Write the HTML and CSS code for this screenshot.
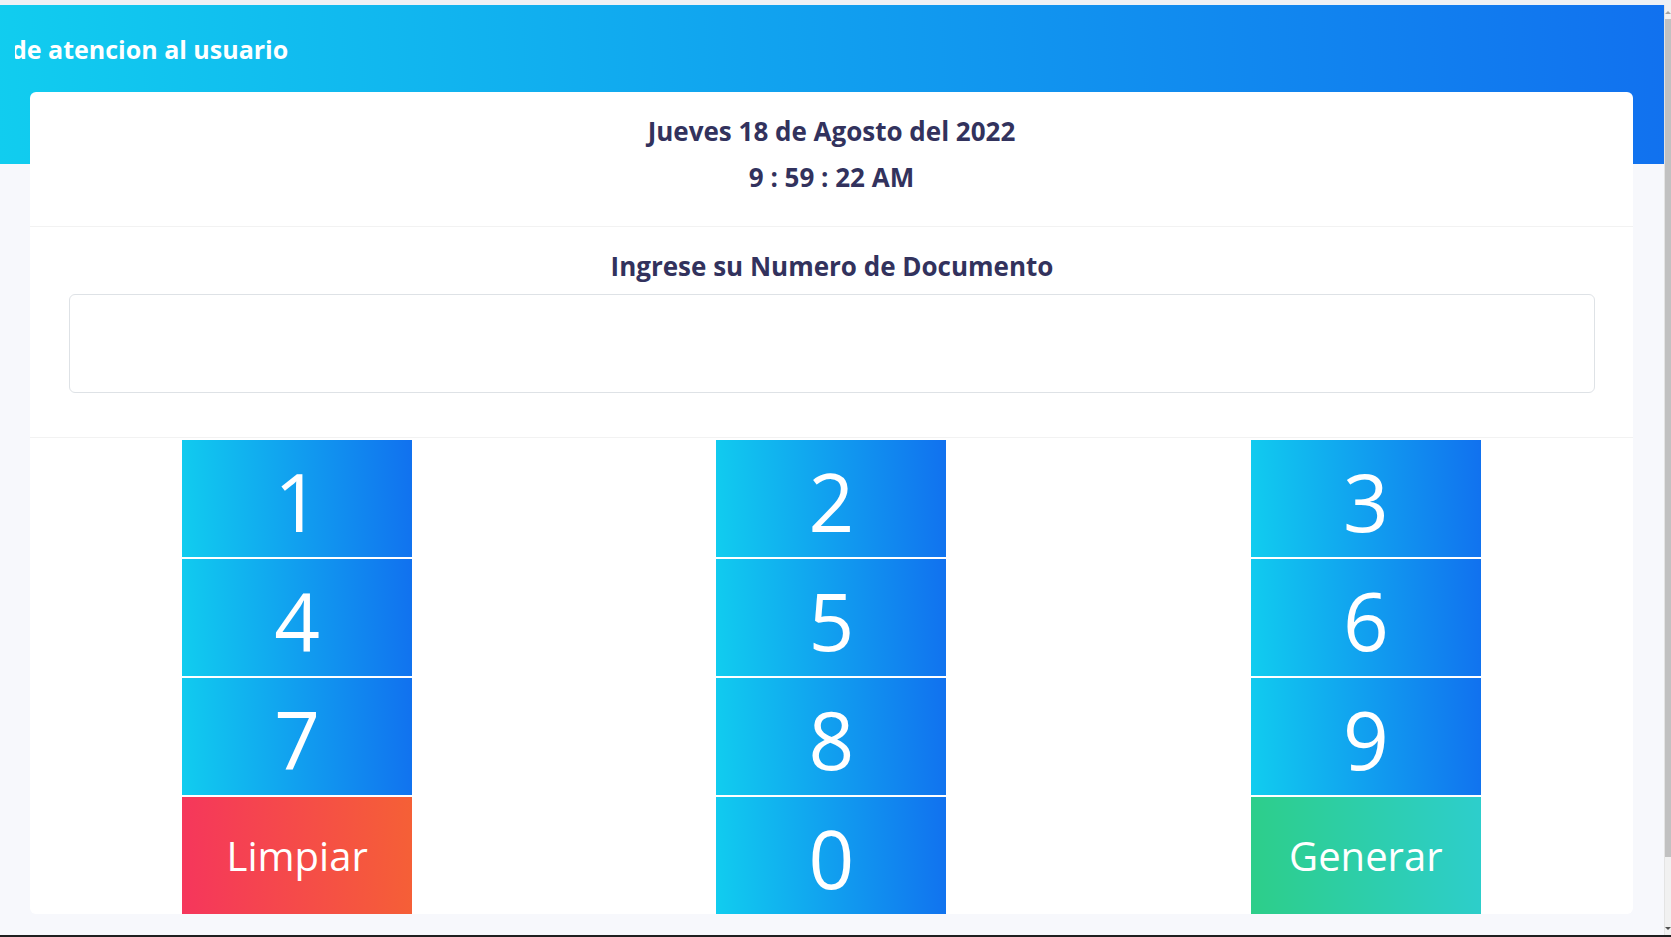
FILE: index.html
```html
<!DOCTYPE html>
<html lang="es">
<head>
<meta charset="utf-8">
<title>Turnos</title>
<link rel="stylesheet" href="styles.css">
</head>
<body>
<div class="topstrip"></div>
<div class="viewport">
  <div class="page">
    <header class="hero">
      <h1 class="hero-title"><span class="hero-text">de atencion al usuario</span></h1>
    </header>
    <main class="card">
      <section class="card-head">
        <div class="date">Jueves 18 de Agosto del 2022</div>
        <div class="time">9 : 59 : 22 AM</div>
      </section>
      <section class="card-body">
        <div class="label">Ingrese su Numero de Documento</div>
        <div class="input"></div>
      </section>
      <section class="keypad">
        <div class="col">
          <button class="key info">1</button>
          <button class="key info">4</button>
          <button class="key info">7</button>
          <button class="key word danger">Limpiar</button>
        </div>
        <div class="col">
          <button class="key info">2</button>
          <button class="key info">5</button>
          <button class="key info">8</button>
          <button class="key info">0</button>
        </div>
        <div class="col">
          <button class="key info">3</button>
          <button class="key info">6</button>
          <button class="key info">9</button>
          <button class="key word success">Generar</button>
        </div>
      </section>
    </main>
  </div>
  <div class="scrollbar">
    <div class="sb-arrow up"></div>
    <div class="sb-thumb"></div>
    <div class="sb-track"></div>
    <div class="sb-arrow down"></div>
  </div>
</div>
<div class="bottomline"></div>
</body>
</html>
```
FILE: styles.css
```css
html, body {
  margin: 0;
  padding: 0;
  height: 937px;
  overflow: hidden;
  background: #f8f9fe;
  font-family: "Open Sans", "Noto Sans", sans-serif;
}

.topstrip {
  height: 5px;
  background: #eef1f5;
}

.viewport {
  display: flex;
  height: 930px;
}

.page {
  flex: 1;
  background: #f7f8fc;
  overflow: hidden;
}

.hero {
  height: 159px;
  background: linear-gradient(87deg, #11cdef 0, #1171ef 100%);
  overflow: hidden;
}

.hero-title {
  margin: 0 0 0 15px;
  padding: 26px 0 0 0;
  overflow: hidden;
  white-space: nowrap;
  color: #ffffff;
  font-size: 25px;
  font-weight: 700;
  line-height: 36px;
}

.hero-text {
  display: inline-block;
  margin-left: -4px;
}

.card {
  margin: -72px 31px 0 30px;
  height: 822px;
  background: #ffffff;
  border-radius: 6px;
  display: flex;
  flex-direction: column;
  overflow: hidden;
}

.card-head {
  height: 135px;
  border-bottom: 1px solid rgba(0, 0, 0, 0.05);
  box-sizing: border-box;
  display: flex;
  flex-direction: column;
  align-items: center;
  padding-top: 20px;
  color: #32325d;
  font-weight: 700;
  font-size: 26px;
}

.date {
  line-height: 38px;
}

.time {
  line-height: 36px;
  margin-top: 9px;
}

.card-body {
  height: 211px;
  border-bottom: 1px solid rgba(0, 0, 0, 0.05);
  box-sizing: border-box;
  padding: 21px 38px 0 39px;
  display: flex;
  flex-direction: column;
  align-items: center;
}

.label {
  color: #32325d;
  font-weight: 700;
  font-size: 26px;
  line-height: 36px;
}

.input {
  align-self: stretch;
  margin-top: 10px;
  height: 99px;
  box-sizing: border-box;
  border: 1px solid #dee2e6;
  border-radius: 6px;
  background: #fff;
}

.keypad {
  display: grid;
  grid-template-columns: 1fr 1fr 1fr;
  padding-top: 2px;
  flex: 1;
}

.col {
  display: flex;
  flex-direction: column;
  align-items: center;
  gap: 2px;
}

.key {
  width: 230px;
  height: 117px;
  border: 0;
  margin: 0;
  padding: 4px 0 0 0;
  box-sizing: border-box;
  display: flex;
  align-items: center;
  justify-content: center;
  color: #ffffff;
  font-family: "Open Sans", "Noto Sans", sans-serif;
  font-size: 80px;
  font-weight: 400;
  line-height: 1;
  cursor: pointer;
}

.key.info {
  background: linear-gradient(87deg, #11cdef 0, #1171ef 100%);
}

.key.word {
  font-size: 40px;
  padding-top: 0;
}

.key.danger {
  background: linear-gradient(87deg, #f5365c 0, #f56036 100%);
}

.key.success {
  background: linear-gradient(87deg, #2dce89 0, #2dcecc 100%);
}

.scrollbar {
  width: 7px;
  display: flex;
  flex-direction: column;
  background: #f1f1f1;
  border-left: 1px solid #e4e4e4;
  box-sizing: border-box;
}

.sb-arrow {
  height: 14px;
  display: flex;
  align-items: center;
  justify-content: center;
}

.sb-arrow::before {
  content: "";
  width: 0;
  height: 0;
  border-left: 3px solid transparent;
  border-right: 3px solid transparent;
}

.sb-arrow.up::before {
  border-bottom: 3px solid #a3a3a3;
}

.sb-arrow.down::before {
  border-top: 3px solid #505050;
}

.sb-thumb {
  height: 838px;
  background: #c1c1c1;
}

.sb-track {
  flex: 1;
}

.bottomline {
  height: 2px;
  background: #1f1f1f;
}
```
